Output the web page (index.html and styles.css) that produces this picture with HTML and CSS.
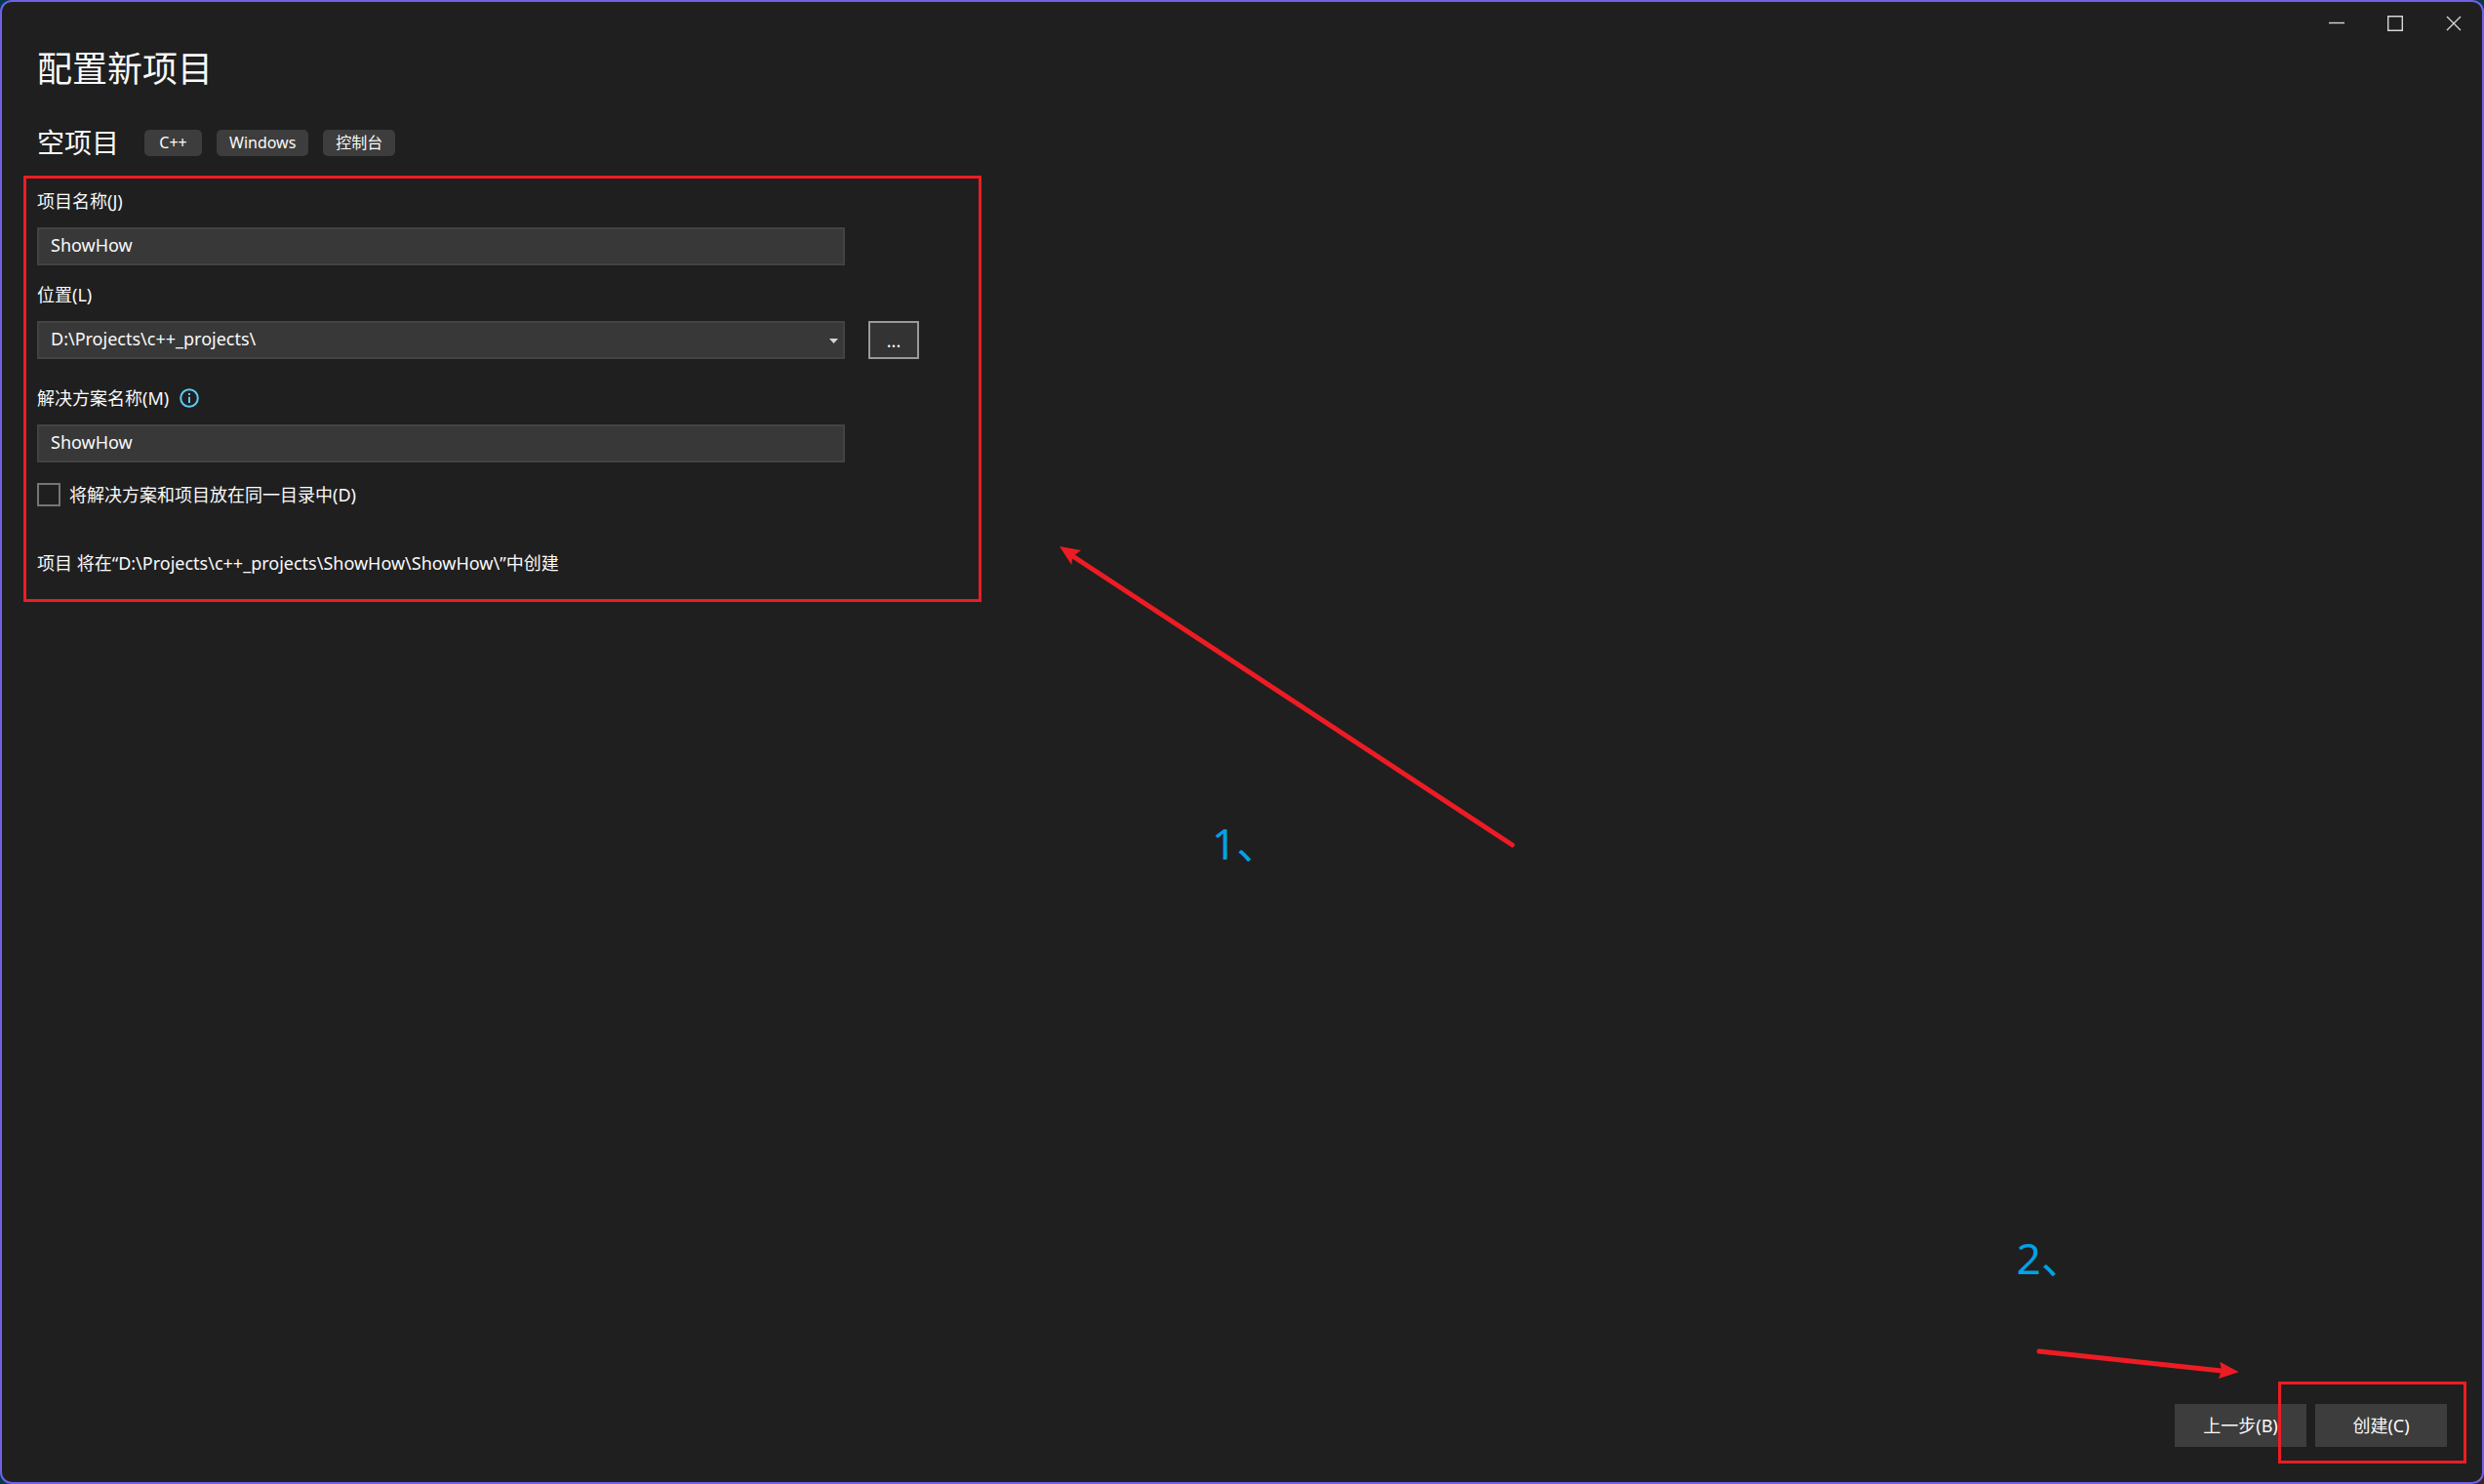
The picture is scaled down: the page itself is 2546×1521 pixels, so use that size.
FILE: index.html
```
<!DOCTYPE html>
<html lang="zh-CN">
<head>
  <meta charset="UTF-8" />
  <meta name="viewport" content="width=device-width, initial-scale=1.0"/>
  <title>配置新项目</title>
  <link rel="stylesheet" href="styles.css">
</head>
<body>

  <div class="window">

    <!-- Title bar -->
    <div class="title-bar">
      <button type="button" class="window-btn" aria-label="最小化">
        <svg width="16" height="16" viewBox="0 0 16 16"><path d="M0 7.5H16"/></svg>
      </button>
      <button type="button" class="window-btn" aria-label="最大化">
        <svg width="16" height="16" viewBox="0 0 16 16"><path d="M.7 .7H15.3V15.3H.7Z"/></svg>
      </button>
      <button type="button" class="window-btn" aria-label="关闭">
        <svg width="16" height="16" viewBox="0 0 16 16"><path d="M1 1L15 15M15 1L1 15"/></svg>
      </button>
    </div>

    <main>
      <h1>配置新项目</h1>

      <div class="template">
        <h2>空项目</h2>
        <ul class="tags">
          <li>C++</li>
          <li>Windows</li>
          <li>控制台</li>
        </ul>
      </div>

      <!-- Project settings -->
      <form class="settings" id="settings">
        <div class="field">
          <label for="project-name">项目名称(J)</label>
          <input type="text" class="box" id="project-name" value="ShowHow" spellcheck="false">
        </div>

        <div class="field">
          <label for="location">位置(L)</label>
          <div class="location-row">
            <div class="combo">
              <select class="box" id="location">
                <option>D:\Projects\c++_projects\</option>
              </select>
              <svg class="caret" width="9" height="5" viewBox="0 0 9 5"><path d="M0 0H9L4.5 5Z"/></svg>
            </div>
            <button type="button" class="browse-btn">...</button>
          </div>
        </div>

        <div class="field solution">
          <label for="solution-name">
            解决方案名称(M)
            <svg class="info" width="20" height="20" viewBox="0 0 20 20">
              <circle cx="10" cy="10" r="8.8"/>
              <path d="M10 8.8V15M10 5V7"/>
            </svg>
          </label>
          <input type="text" class="box" id="solution-name" value="ShowHow" spellcheck="false">
        </div>

        <div class="same-folder">
          <input type="checkbox" id="same-folder">
          <label for="same-folder">将解决方案和项目放在同一目录中(D)</label>
        </div>

        <p class="summary">项目 将在“D:\Projects\c++_projects\ShowHow\ShowHow\”中创建</p>
      </form>
    </main>

    <footer>
      <button type="button" class="action-btn">上一步(B)</button>
      <div class="create">
        <button type="submit" form="settings" class="action-btn">创建(C)</button>
      </div>
    </footer>

    <!-- Step 1 -->
    <svg class="arrow arrow-one" width="472" height="316" viewBox="0 0 472 316">
      <path class="shaft" d="M16 11L468 308"/>
      <path class="head" d="M4 2L26 6L20 10.500L17 14.500L16.300 21Z"/>
    </svg>
    <span class="step step-one">1、</span>

    <!-- Step 2 -->
    <svg class="arrow arrow-two" width="212" height="37" viewBox="0 0 212 37">
      <path class="shaft" d="M6 9L193 29"/>
      <path class="head" d="M210.700 30.300L191.300 19.700L192.700 26.500L192 31.500L190 37Z"/>
    </svg>
    <span class="step step-two">2、</span>

  </div>

</body>
</html>
```
FILE: styles.css
```
* {
  box-sizing: border-box;
}

body {
  margin: 0;
  background: linear-gradient(135deg, #04384c 60%, #3a2420);
  font-family: "Noto Sans", "Noto Sans CJK SC", sans-serif;
  font-size: 18px;
  line-height: 24px;
  color: #fafafa;
}

button, input, select {
  font: inherit;
  color: inherit;
}

h1, h2, p, ul {
  margin: 0;
  padding: 0;
  font-weight: normal;
}

.window {
  position: relative;
  display: flex;
  flex-direction: column;
  min-height: 100vh;
  background: #1f1f1f;
  border: 2px solid #7160e8;
  border-radius: 12px;
}

.title-bar {
  display: flex;
  justify-content: flex-end;
}

.window-btn {
  display: flex;
  align-items: center;
  justify-content: center;
  width: 60px;
  height: 44px;
  padding: 0 0 0 2px;
  background: none;
  border: none;
}

.window-btn svg {
  fill: none;
  stroke: #d6d6d6;
  stroke-width: 1.4;
}

main {
  padding: 4px 22px 0;
}

h1 {
  padding-left: 14px;
  font-size: 36px;
  line-height: 42px;
}

.template {
  display: flex;
  align-items: center;
  gap: 26px;
  margin: 36px 0 16px;
  padding-left: 14px;
}

h2 {
  font-size: 28px;
  line-height: 36px;
}

.tags {
  display: flex;
  gap: 15px;
  list-style: none;
}

.tags li {
  min-width: 59px;
  padding: 0 13px;
  background: #3d3d3d;
  border-radius: 5px;
  font-size: 16px;
  line-height: 27px;
  text-align: center;
}

.settings {
  max-width: 982px;
  padding: 11px 11px 25px;
  border: 3px solid #ed1c24;
}

.field {
  display: flex;
  flex-direction: column;
  gap: 15px;
  margin-bottom: 18px;
}

.field label {
  display: flex;
  align-items: center;
  gap: 11px;
}

.box {
  width: 828px;
  max-width: 100%;
  height: 39px;
  padding: 0 12px 3px;
  background: #383838;
  border: 2px solid #434343;
  border-radius: 0;
  appearance: none;
}

.location-row {
  display: flex;
  gap: 24px;
}

.combo {
  position: relative;
}

.combo .box {
  display: block;
}

.caret {
  position: absolute;
  right: 7px;
  top: 18px;
  fill: #d6d6d6;
  pointer-events: none;
}

.browse-btn {
  width: 52px;
  height: 39px;
  padding: 0;
  background: #333;
  border: 2px solid #999;
}

.solution {
  margin: 28px 0 21px;
}

.info {
  fill: none;
  stroke: #5fcbf5;
  stroke-width: 2;
}

.same-folder {
  display: flex;
  align-items: center;
  gap: 9px;
  margin-bottom: 46px;
}

.same-folder input {
  width: 24px;
  height: 24px;
  margin: 0;
  border: 2px solid #757575;
  appearance: none;
}

footer {
  display: flex;
  justify-content: flex-end;
  gap: 9px;
  margin-top: auto;
  padding: 36px;
}

.action-btn {
  display: block;
  width: 135px;
  height: 44px;
  padding: 0;
  background: #3d3d3d;
  border: none;
}

.create {
  position: relative;
}

/* red frame around the create button */
.create::after {
  content: "";
  position: absolute;
  inset: -23px -20px -17px -38px;
  border: 3px solid #ed1c24;
  pointer-events: none;
}

.arrow {
  position: absolute;
  pointer-events: none;
}

.shaft {
  fill: none;
  stroke: #ed1c24;
  stroke-width: 5;
  stroke-linecap: round;
}

.head {
  fill: #ed1c24;
}

.arrow-one {
  left: 1080px;
  top: 556px;
}

.arrow-two {
  right: 248px;
  bottom: 106px;
}

.step {
  position: absolute;
  font-size: 44px;
  line-height: 60px;
  color: #00a2e8;
}

.step-one {
  left: 1240px;
  top: 832px;
}

.step-two {
  right: 408px;
  bottom: 200px;
}
```
